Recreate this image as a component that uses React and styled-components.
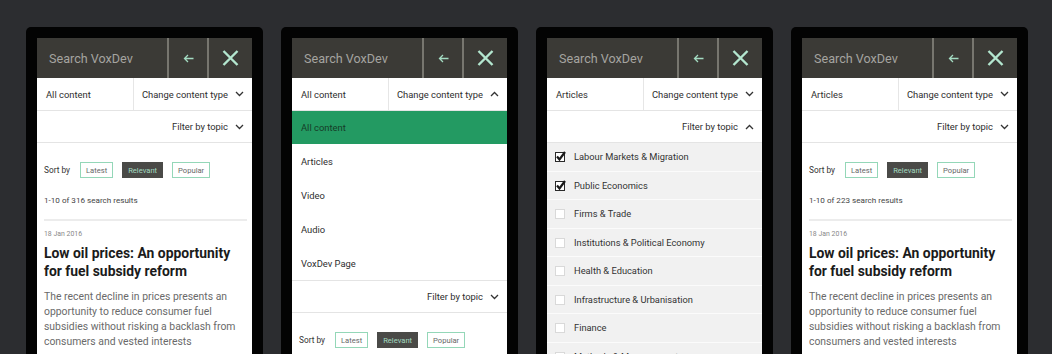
import React from 'react';
import styled, { createGlobalStyle } from 'styled-components';

const GlobalStyle = createGlobalStyle`
  html, body {
    margin: 0;
    padding: 0;
    background: #2c2d30;
  }
  * {
    box-sizing: border-box;
  }
`;

const Stage = styled.div`
  display: flex;
  gap: 18px;
  height: 354px;
  padding: 27px 0 0 26px;
  overflow: hidden;
  font-family: Roboto, 'Noto Sans', sans-serif;
`;

const Phone = styled.div`
  width: 237px;
  height: 327px;
  flex-shrink: 0;
  background: #030303;
  border-radius: 5px 5px 0 0;
  padding: 11px 11px 0;
`;

const Screen = styled.div`
  height: 100%;
  background: #fff;
  overflow: hidden;
  display: flex;
  flex-direction: column;
`;

const SearchBar = styled.div`
  display: flex;
  height: 40px;
  background: #3b3a36;
  flex-shrink: 0;
`;

const SearchField = styled.div`
  flex: 1;
  display: flex;
  align-items: center;
  padding-left: 12px;
  font-size: 12.6px;
  color: #a5a4a0;
  border-right: 2px solid #77766f;
`;

const IconButton = styled.div`
  width: ${(p) => p.$w}px;
  display: flex;
  align-items: center;
  justify-content: center;
  border-right: ${(p) => (p.$sep ? '2px solid #77766f' : 'none')};
`;

const SelectRow = styled.div`
  display: flex;
  height: 33px;
  border-bottom: 1px solid #e4e4e4;
  flex-shrink: 0;
  font-size: 9.4px;
  color: #2e2e2e;
  white-space: nowrap;
`;

const CurrentType = styled.div`
  width: 97px;
  flex-shrink: 0;
  display: flex;
  align-items: center;
  padding-left: 9px;
  border-right: 1px solid #e6e6e6;
`;

const Toggle = styled.div`
  flex: 1;
  display: flex;
  align-items: center;
  justify-content: ${(p) => (p.$end ? 'flex-end' : 'space-between')};
  gap: 7px;
  padding: 0 8px;
  white-space: nowrap;
`;

const FilterRow = styled.div`
  display: flex;
  height: 32px;
  flex-shrink: 0;
  border-bottom: 1px solid #e4e4e4;
  font-size: 9.4px;
  color: #2e2e2e;
`;

const TypeList = styled.div`
  display: flex;
  flex-direction: column;
  flex-shrink: 0;
  border-bottom: 1px solid #e4e4e4;
`;

const TypeOption = styled.div`
  height: ${(p) => (p.$active ? 33 : 34)}px;
  display: flex;
  align-items: center;
  padding-left: 9px;
  font-size: 9.4px;
  background: ${(p) => (p.$active ? '#239a62' : '#fff')};
  color: ${(p) => (p.$active ? '#163c28' : '#2e2e2e')};
`;

const TopicList = styled.div`
  background: #f1f1f1;
  flex: 1;
`;

const TopicItem = styled.div`
  height: 28.5px;
  display: flex;
  align-items: center;
  gap: 8px;
  padding-left: 8px;
  border-bottom: 1px solid #fbfbfb;
  font-size: 9.3px;
  color: #333;
  white-space: nowrap;
`;

const SortBar = styled.div`
  display: flex;
  align-items: center;
  padding: 19px 0 0 7px;
  flex-shrink: 0;
`;

const SortLabel = styled.span`
  font-size: 8.3px;
  color: #333;
  margin-right: 10px;
`;

const SortButton = styled.span`
  height: 16px;
  display: inline-flex;
  align-items: center;
  padding: 0 5px;
  margin-right: 9px;
  font-size: 7.6px;
  border: 1.5px solid ${(p) => (p.$selected ? '#4a4a47' : '#94d7b8')};
  background: ${(p) => (p.$selected ? '#4a4a47' : '#fff')};
  color: ${(p) => (p.$selected ? '#a4dbc0' : '#666')};
`;

const Results = styled.div`
  padding: 0 5px 0 7px;
`;

const Count = styled.div`
  font-size: 8.1px;
  color: #444;
  margin-top: 17px;
  padding-bottom: 14px;
  border-bottom: 2px solid #ececec;
`;

const Date = styled.div`
  font-size: 6.9px;
  color: #888;
  margin-top: 9px;
`;

const Title = styled.h2`
  margin: 6px 0 0;
  font-size: 13.9px;
  line-height: 18px;
  font-weight: 700;
  color: #1b1b1b;
  width: 200px;
`;

const Summary = styled.p`
  margin: 9px 0 0;
  font-size: 10.4px;
  line-height: 15px;
  color: #6a6a6a;
  width: 196px;
`;

const Chevron = ({ up }) => (
  <svg width="9" height="6" viewBox="0 0 9 6" style={{ flexShrink: 0 }}>
    <path
      d={up ? 'M1 5 L4.5 1.5 L8 5' : 'M1 1 L4.5 4.5 L8 1'}
      fill="none"
      stroke="#333"
      strokeWidth="1.3"
    />
  </svg>
);

const BackArrow = () => (
  <svg width="11" height="9" viewBox="0 0 11 9">
    <path d="M10.5 4.5 H1.5 M5 1 L1.5 4.5 L5 8" fill="none" stroke="#a3dbc2" strokeWidth="1.3" />
  </svg>
);

const CloseIcon = () => (
  <svg width="17" height="16" viewBox="0 0 17 16">
    <path d="M1.5 1 L15.5 15 M15.5 1 L1.5 15" fill="none" stroke="#b3e6cf" strokeWidth="2.4" />
  </svg>
);

const Check = ({ on }) => (
  <svg width="11" height="11" viewBox="0 0 11 11" style={{ flexShrink: 0 }}>
    <rect x="0.5" y="1.5" width="9" height="9" fill="#fff" stroke={on ? '#2a2a2a' : '#d9d9d9'} />
    {on && <path d="M2 5.5 L4.5 8.5 L10 1" fill="none" stroke="#1a1a1a" strokeWidth="2.2" />}
  </svg>
);

const Header = () => (
  <SearchBar>
    <SearchField>Search VoxDev</SearchField>
    <IconButton $w={40} $sep>
      <BackArrow />
    </IconButton>
    <IconButton $w={43}>
      <CloseIcon />
    </IconButton>
  </SearchBar>
);

const TypeSelect = ({ current, open }) => (
  <SelectRow>
    <CurrentType>{current}</CurrentType>
    <Toggle>
      Change content type
      <Chevron up={open} />
    </Toggle>
  </SelectRow>
);

const TopicFilter = ({ open }) => (
  <FilterRow>
    <Toggle $end>
      Filter by topic
      <Chevron up={open} />
    </Toggle>
  </FilterRow>
);

const Sort = () => (
  <SortBar>
    <SortLabel>Sort by</SortLabel>
    <SortButton>Latest</SortButton>
    <SortButton $selected>Relevant</SortButton>
    <SortButton>Popular</SortButton>
  </SortBar>
);

const ResultList = ({ total }) => (
  <Results>
    <Count>1-10 of {total} search results</Count>
    <Date>18 Jan 2016</Date>
    <Title>Low oil prices: An opportunity for fuel subsidy reform</Title>
    <Summary>
      The recent decline in prices presents an opportunity to reduce consumer fuel subsidies
      without risking a backlash from consumers and vested interests
    </Summary>
  </Results>
);

const types = ['All content', 'Articles', 'Video', 'Audio', 'VoxDev Page'];

const topics = [
  ['Labour Markets & Migration', true],
  ['Public Economics', true],
  ['Firms & Trade', false],
  ['Institutions & Political Economy', false],
  ['Health & Education', false],
  ['Infrastructure & Urbanisation', false],
  ['Finance', false],
  ['Methods & Measurement', false],
];

export default function App() {
  return (
    <>
      <GlobalStyle />
      <Stage>
        <Phone>
          <Screen>
            <Header />
            <TypeSelect current="All content" />
            <TopicFilter />
            <Sort />
            <ResultList total={316} />
          </Screen>
        </Phone>

        <Phone>
          <Screen>
            <Header />
            <TypeSelect current="All content" open />
            <TypeList>
              {types.map((t, i) => (
                <TypeOption key={t} $active={i === 0}>
                  {t}
                </TypeOption>
              ))}
            </TypeList>
            <TopicFilter />
            <Sort />
          </Screen>
        </Phone>

        <Phone>
          <Screen>
            <Header />
            <TypeSelect current="Articles" />
            <TopicFilter open />
            <TopicList>
              {topics.map(([name, on]) => (
                <TopicItem key={name}>
                  <Check on={on} />
                  {name}
                </TopicItem>
              ))}
            </TopicList>
          </Screen>
        </Phone>

        <Phone>
          <Screen>
            <Header />
            <TypeSelect current="Articles" />
            <TopicFilter />
            <Sort />
            <ResultList total={223} />
          </Screen>
        </Phone>
      </Stage>
    </>
  );
}
